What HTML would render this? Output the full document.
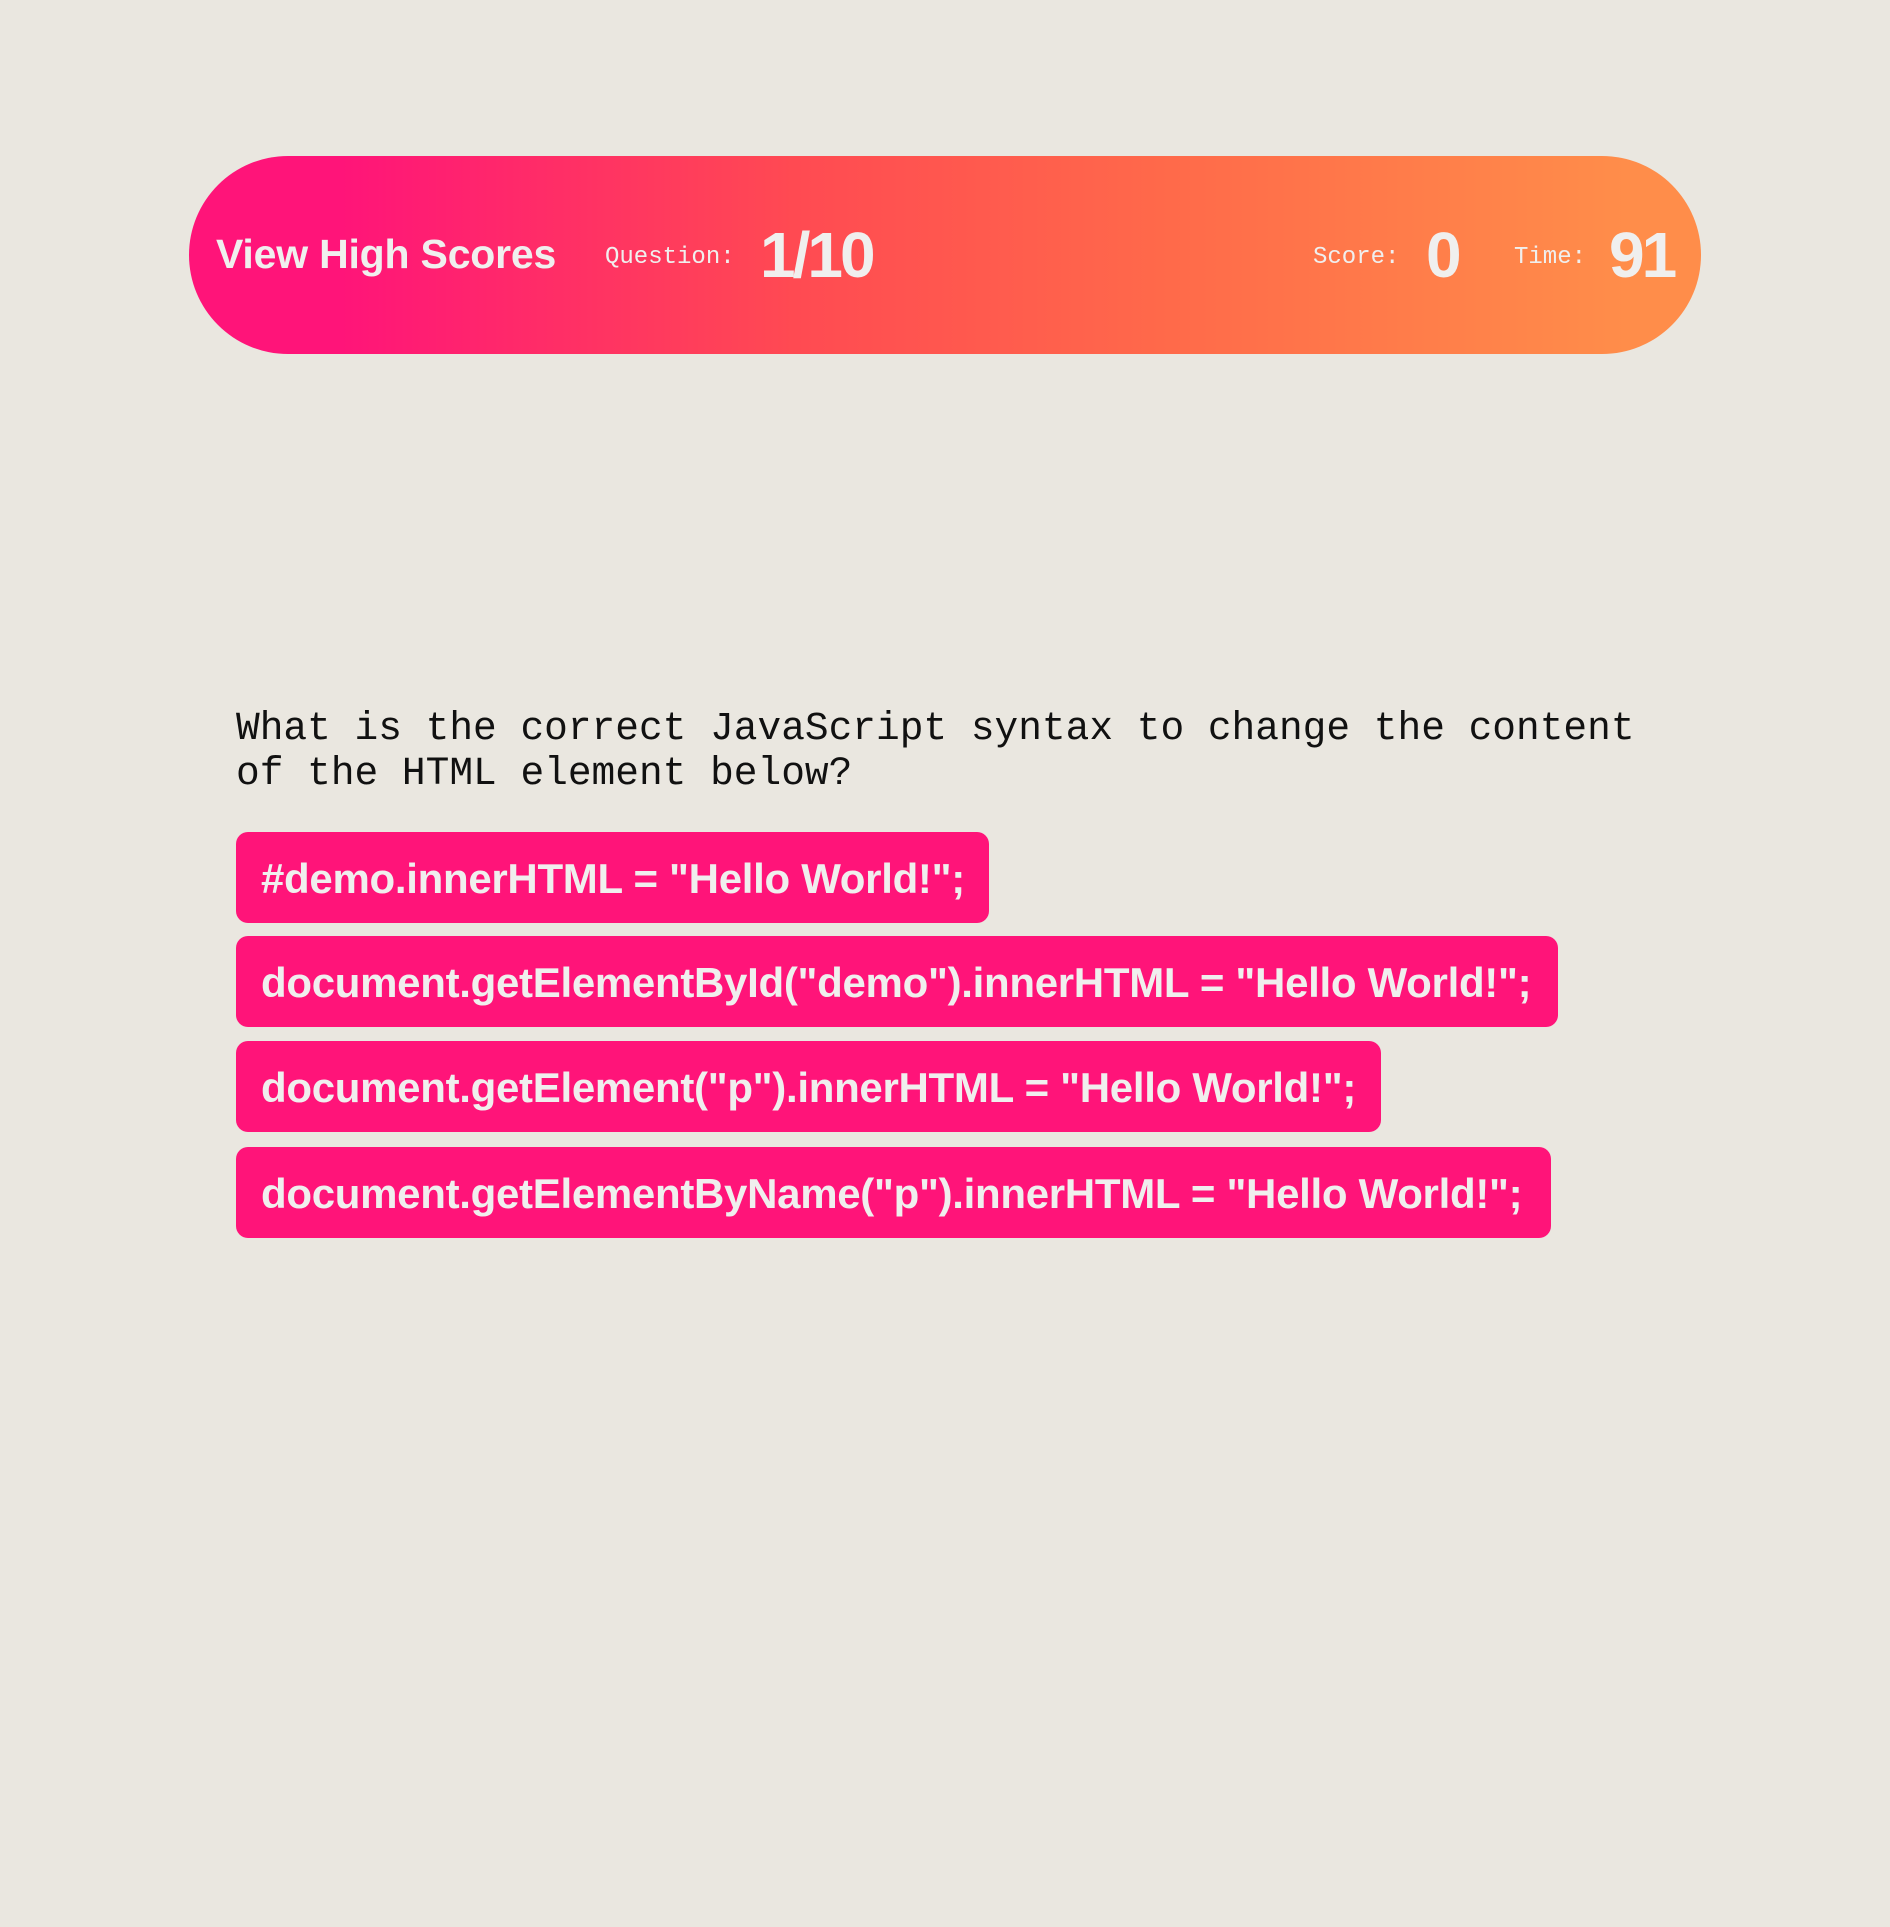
<!DOCTYPE html>
<html><head><meta charset="utf-8"><style>
html,body{margin:0;padding:0;background:#eae7e0;width:1890px;height:1927px;overflow:hidden;}
.hdr{position:absolute;left:189px;top:156px;width:1512px;height:198px;border-radius:99px;background:linear-gradient(90deg,#ff1479 10%,#ff4a52 40%,#ff6a4a 65%,#ff8d4a 95%);color:#f0efee;}
.hdr span{position:absolute;white-space:nowrap;}
.b{font-family:"Liberation Sans",sans-serif;font-weight:bold;}
.m{font-family:"Liberation Mono",monospace;}
.q{position:absolute;left:236px;top:706px;font-family:"Liberation Mono",monospace;font-size:39.5px;line-height:45px;color:#111;white-space:pre;}
.btn{position:absolute;left:236px;height:91px;background:#ff1479;border-radius:12px;color:#f0efee;font-family:"Liberation Sans",sans-serif;font-weight:bold;font-size:42px;letter-spacing:-0.3px;line-height:93px;padding-left:25px;box-sizing:border-box;white-space:nowrap;}
</style></head><body>
<div class="hdr">
<span class="b" style="left:27px;top:75px;font-size:41px;letter-spacing:-0.2px;">View High Scores</span>
<span class="m" style="left:416px;top:88px;font-size:24px;">Question:</span>
<span class="b" style="left:571px;top:62px;font-size:64px;letter-spacing:-3px;">1/10</span>
<span class="m" style="left:1124px;top:88px;font-size:24px;">Score:</span>
<span class="b" style="left:1237px;top:62px;font-size:64px;">0</span>
<span class="m" style="left:1325px;top:88px;font-size:24px;">Time:</span>
<span class="b" style="left:1420px;top:62px;font-size:64px;letter-spacing:-3px;">91</span>
</div>
<div class="q">What is the correct JavaScript syntax to change the content
of the HTML element below?</div>
<div class="btn" style="top:832px;width:753px;">#demo.innerHTML = "Hello World!";</div>
<div class="btn" style="top:936px;width:1322px;">document.getElementById("demo").innerHTML = "Hello World!";</div>
<div class="btn" style="top:1041px;width:1145px;">document.getElement("p").innerHTML = "Hello World!";</div>
<div class="btn" style="top:1147px;width:1315px;">document.getElementByName("p").innerHTML = "Hello World!";</div>
</body></html>
